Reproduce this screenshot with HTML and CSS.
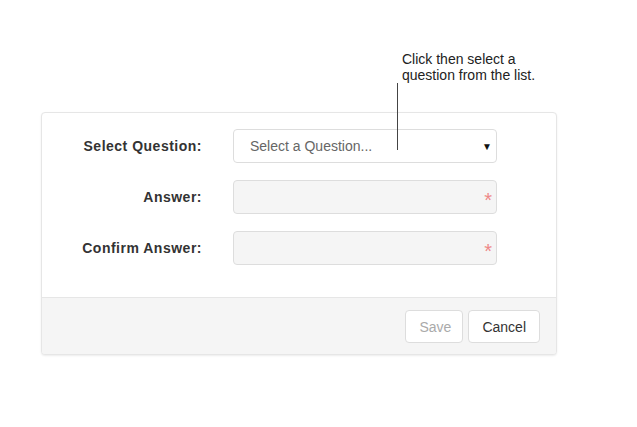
FILE: index.html
```html
<!DOCTYPE html>
<html>
<head>
<meta charset="utf-8">
<link rel="stylesheet" href="styles.css">
</head>
<body>
<div class="page">
  <div class="hint">
    <p class="hint-text">Click then select a<br>question from the list.</p>
    <span class="pointer"></span>
  </div>
  <div class="card">
    <div class="card-body">
      <div class="row">
        <label class="label">Select Question:</label>
        <div class="select">
          <span class="placeholder">Select a Question...</span>
          <span class="caret">&#9660;</span>
        </div>
      </div>
      <div class="row">
        <label class="label">Answer:</label>
        <div class="input"><span class="req">*</span></div>
      </div>
      <div class="row">
        <label class="label">Confirm Answer:</label>
        <div class="input"><span class="req">*</span></div>
      </div>
    </div>
    <div class="card-footer">
      <button class="btn btn-disabled">Save</button>
      <button class="btn">Cancel</button>
    </div>
  </div>
</div>
</body>
</html>
```

FILE: styles.css
```css
html, body {
  margin: 0;
  padding: 0;
  background: #fff;
  font-family: "Liberation Sans", Arial, sans-serif;
  color: #333;
}
.page {
  width: 637px;
  height: 427px;
  position: relative;
}
.hint {
  position: relative;
  padding: 51px 0 0 402px;
  height: 33px;
}
.hint-text {
  margin: 0;
  font-size: 14px;
  line-height: 16px;
  color: #222;
}
.pointer {
  position: absolute;
  z-index: 2;
  left: 397px;
  top: 83px;
  width: 1px;
  height: 67px;
  background: #444;
}
.card {
  margin: 28px 0 0 41px;
  width: 514px;
  border: 1px solid #e6e6e6;
  border-radius: 4px;
  box-shadow: 0 1px 2px rgba(0,0,0,0.08);
  background: #fff;
  overflow: hidden;
}
.card-body {
  padding: 16px 0 32px 0;
  display: flex;
  flex-direction: column;
  gap: 17px;
}
.row {
  display: grid;
  grid-template-columns: 160px 264px;
  column-gap: 31px;
  align-items: center;
}
.label {
  text-align: right;
  font-weight: bold;
  font-size: 14px;
  letter-spacing: 0.5px;
  color: #333;
}
.select, .input {
  box-sizing: border-box;
  height: 34px;
  border: 1px solid #ddd;
  border-radius: 4px;
  position: relative;
  display: flex;
  align-items: center;
}
.select {
  background: #fff;
  padding: 0 4px 0 16px;
  justify-content: space-between;
}
.placeholder {
  font-size: 14px;
  color: #666;
}
.caret {
  font-size: 10px;
  color: #111;
}
.input {
  background: #f5f5f5;
}
.req {
  position: absolute;
  right: 4px;
  top: 9px;
  color: #ee8888;
  font-size: 20px;
  line-height: 20px;
}
.card-footer {
  background: #f5f5f5;
  border-top: 1px solid #e6e6e6;
  padding: 12px 16px 11px 0;
  display: flex;
  justify-content: flex-end;
  gap: 5px;
}
.btn {
  box-sizing: border-box;
  height: 33px;
  padding: 0 13px;
  font-family: "Liberation Sans", Arial, sans-serif;
  font-size: 14px;
  color: #333;
  background: #fff;
  border: 1px solid #ddd;
  border-radius: 4px;
}
.btn-disabled {
  color: #aaa;
  width: 58px;
}
```
